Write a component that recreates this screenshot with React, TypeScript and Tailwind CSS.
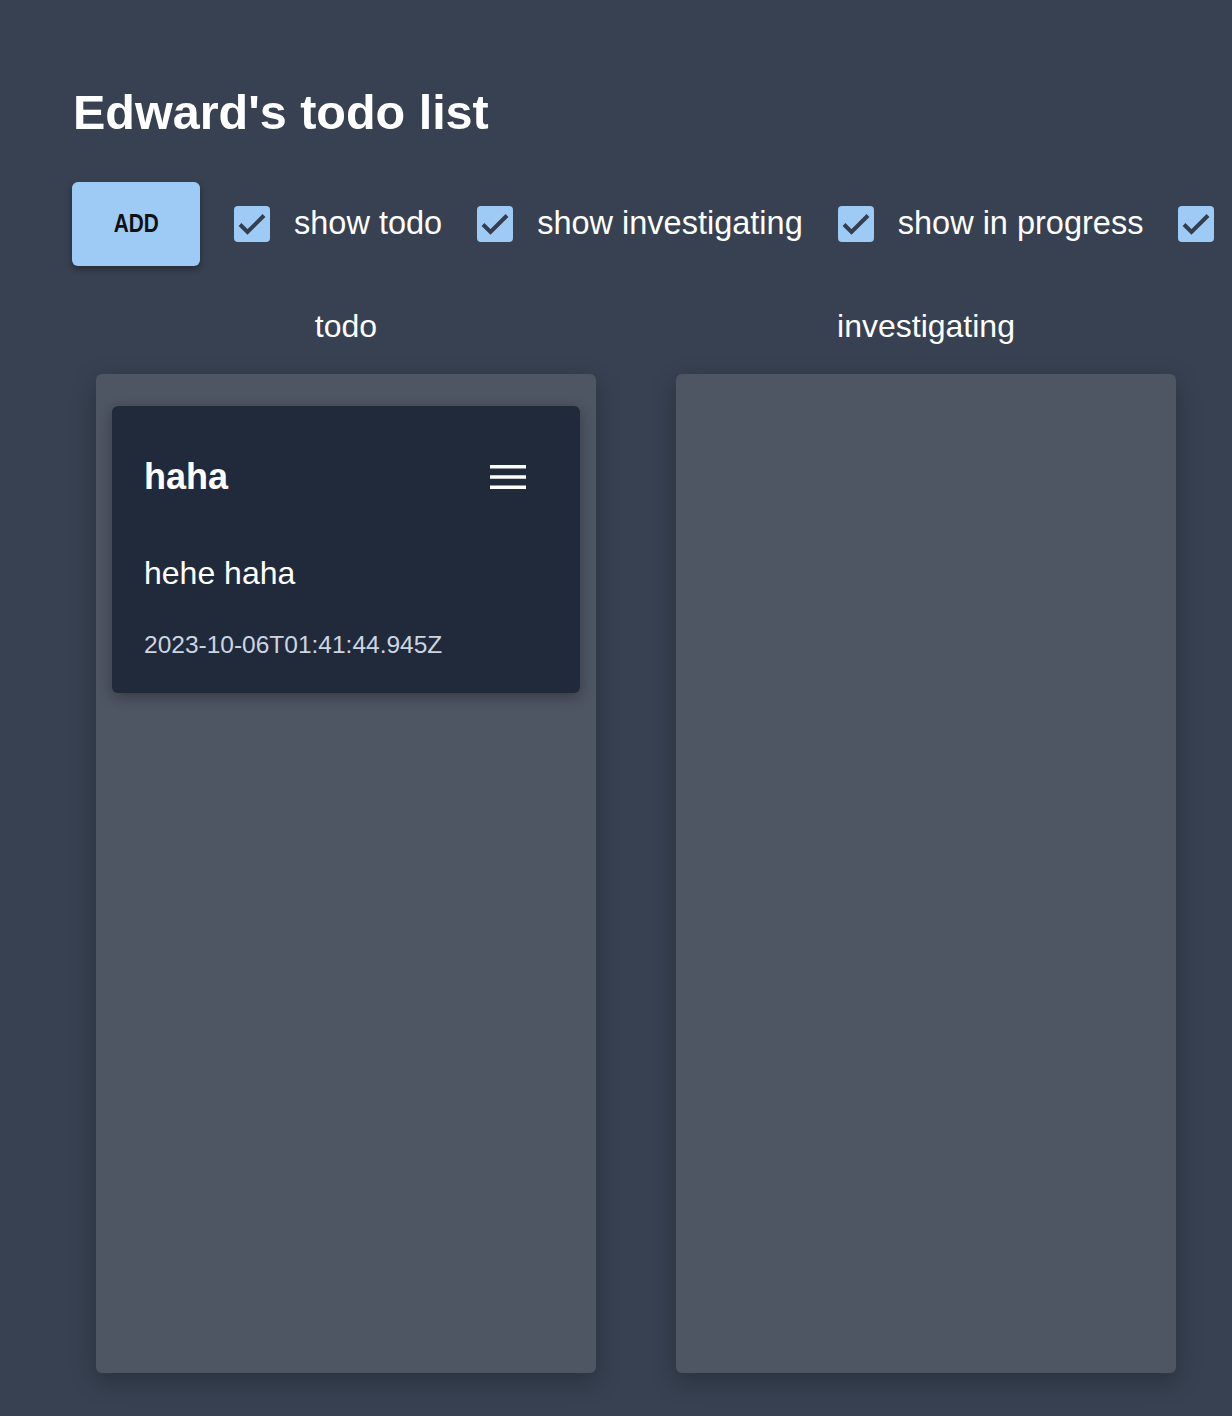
import React from 'react';

const FONT = { fontFamily: '"Liberation Sans", Arial, sans-serif' };

function CheckBox({ label }: { label: string }) {
  return (
    <label className="flex items-center gap-6 shrink-0">
      <span className="w-9 h-9 rounded-[4px] bg-[#9ecbf5] flex items-center justify-center shrink-0">
        <svg className="w-9 h-9" viewBox="0 0 36 36" fill="none" stroke="#343e4f" strokeWidth={4} strokeLinejoin="miter">
          <path d="M6 18.5l7.5 7.5L30 9.5" />
        </svg>
      </span>
      <span className="text-[32.5px] leading-none text-white whitespace-nowrap">{label}</span>
    </label>
  );
}

function Card({ title, body, date }: { title: string; body: string; date: string }) {
  return (
    <div className="bg-[#212a3b] rounded-md shadow-[0_4px_14px_rgba(0,0,0,0.3)] px-8 pt-[53px] pb-[36px]">
      <div className="flex items-center justify-between pr-[22px]">
        <h2 className="text-[36px] leading-none font-bold text-white">{title}</h2>
        <svg width="36" height="24" viewBox="0 0 36 24">
          <rect x="0" y="0" width="36" height="3.5" fill="white" />
          <rect x="0" y="10.25" width="36" height="3.5" fill="white" />
          <rect x="0" y="20.5" width="36" height="3.5" fill="white" />
        </svg>
      </div>
      <p className="mt-[62px] text-[32px] leading-none text-white">{body}</p>
      <p className="mt-[44px] text-[24.5px] leading-none text-[#cdd5e0]">{date}</p>
    </div>
  );
}

function Column({ name, children }: { name: string; children?: React.ReactNode }) {
  return (
    <div className="w-[500px] shrink-0 flex flex-col">
      <div className="text-center text-[32px] leading-none text-white h-[64px]">{name}</div>
      <div className="bg-[#4e5563] rounded-md h-[999px] px-4 pt-8 shadow-[0_8px_24px_rgba(0,0,0,0.25)]">
        {children}
      </div>
    </div>
  );
}

export default function App() {
  return (
    <div className="bg-[#374151] w-full h-[1416px] overflow-hidden" style={FONT}>
      <div className="pl-[72px] pt-[88px]">
        <h1 className="text-[48.5px] leading-none font-bold text-white pl-[1px]">Edward's todo list</h1>
        <div className="mt-[45px] flex items-center w-[1400px]">
          <button
            className="w-32 h-[84px] shrink-0 rounded-md bg-[#9ecbf5] shadow-[0_3px_6px_rgba(0,0,0,0.35)] text-[#111] text-[26px] font-bold"
            style={{ fontFamily: '"Liberation Sans Narrow", "Arial Narrow", sans-serif' }}
          >
            <span className="inline-block scale-x-[0.8]">ADD</span>
          </button>
          <div className="ml-[34px] flex items-center gap-[35px]">
            <CheckBox label="show todo" />
            <CheckBox label="show investigating" />
            <CheckBox label="show in progress" />
            <CheckBox label="show done" />
          </div>
        </div>
        <div className="mt-[44px] pl-6 flex gap-20">
          <Column name="todo">
            <Card title="haha" body="hehe haha" date="2023-10-06T01:41:44.945Z" />
          </Column>
          <Column name="investigating" />
        </div>
      </div>
    </div>
  );
}
